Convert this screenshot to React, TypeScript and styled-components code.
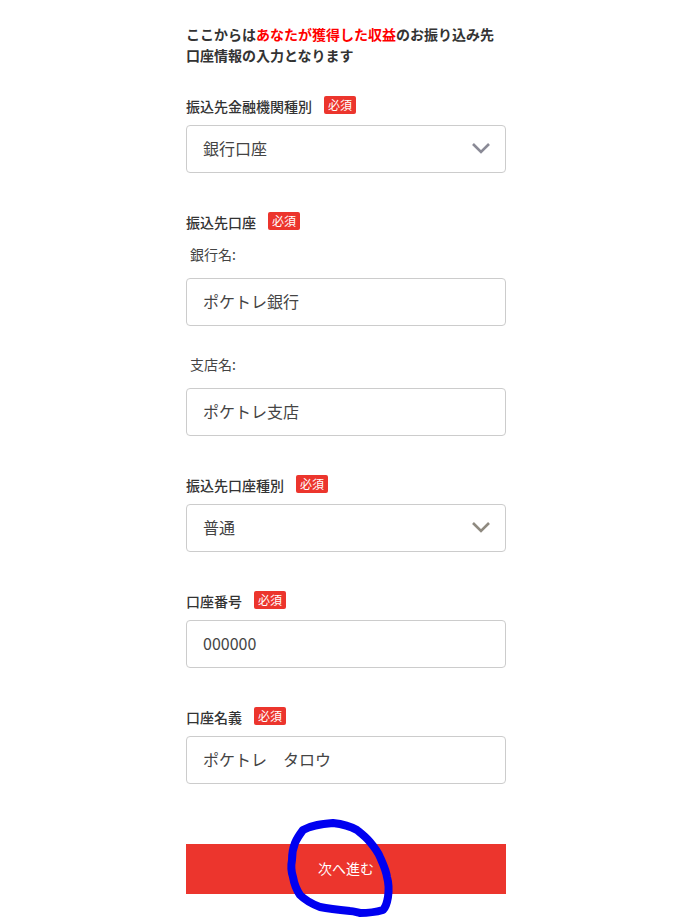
import React from "react";
import styled, { createGlobalStyle } from "styled-components";

const Global = createGlobalStyle`
  html, body { margin: 0; padding: 0; background: #fff; }
  body { font-family: "Noto Sans CJK JP", "Noto Sans", sans-serif; color: #333; }
`;

const Page = styled.div`
  position: relative;
  width: 692px;
  height: 918px;
  overflow: hidden;
  background: #fff;
`;

const Form = styled.form`
  width: 320px;
  margin: 0 auto 0 186px;
  padding-top: 24px;
  display: flex;
  flex-direction: column;
`;

const Intro = styled.p`
  margin: 0 0 30px;
  font-size: 14px;
  line-height: 21px;
  font-weight: 700;
  color: #333;
`;

const Accent = styled.span`
  color: #ff0000;
`;

const Field = styled.div<{ $gap?: number }>`
  display: flex;
  flex-direction: column;
  margin-bottom: ${(p) => p.$gap ?? 39}px;
`;

const LabelRow = styled.div<{ $gap?: number }>`
  display: flex;
  align-items: flex-start;
  gap: 12px;
  height: 18px;
  margin-bottom: ${(p) => p.$gap ?? 11}px;
`;

const Label = styled.label`
  font-size: 14px;
  line-height: 20px;
  margin-top: 0;
  font-weight: 500;
  color: #333;
`;

const Badge = styled.span`
  display: flex;
  align-items: center;
  justify-content: center;
  width: 32px;
  height: 18px;
  border-radius: 2px;
  background: #ec352d;
  color: #fff;
  font-size: 12px;
  line-height: 18px;
`;

const SubLabel = styled.div`
  font-size: 14px;
  line-height: 20px;
  height: 20px;
  padding-left: 4px;
  margin-top: -1px;
  margin-bottom: 14px;
  color: #444;
`;

const Box = styled.div`
  box-sizing: border-box;
  display: flex;
  align-items: center;
  justify-content: space-between;
  height: 48px;
  padding: 0 14px 2px 16px;
  border: 1px solid #ccc;
  border-radius: 4px;
  background: #fff;
  font-size: 16px;
  color: #444;
`;

const Chevron = styled.svg`
  display: block;
  width: 20px;
  height: 12px;
`;

const Submit = styled.button`
  display: block;
  width: 320px;
  height: 50px;
  margin-top: 21px;
  padding: 0 0 2px;
  border: 0;
  background: #ec352d;
  color: #fff;
  font-family: inherit;
  font-size: 14px;
`;

const Scribble = styled.svg`
  position: absolute;
  left: 0;
  top: 0;
  width: 692px;
  height: 918px;
  pointer-events: none;
`;

const Arrow = ({ color }: { color: string }) => (
  <Chevron viewBox="0 0 20 12" aria-hidden="true">
    <path d="M2 2 L10 10 L18 2" fill="none" stroke={color} strokeWidth="2.6" />
  </Chevron>
);

export default function App() {
  return (
    <Page>
      <Global />
      <Form>
        <Intro>
          ここからは<Accent>あなたが獲得した収益</Accent>のお振り込み先口座情報の入力となります
        </Intro>

        <Field>
          <LabelRow>
            <Label>振込先金融機関種別</Label>
            <Badge>必須</Badge>
          </LabelRow>
          <Box>
            銀行口座
            <Arrow color="#8a8a96" />
          </Box>
        </Field>

        <Field $gap={29}>
          <LabelRow $gap={15}>
            <Label>振込先口座</Label>
            <Badge>必須</Badge>
          </LabelRow>
          <SubLabel>銀行名:</SubLabel>
          <Box>ポケトレ銀行</Box>
        </Field>

        <Field>
          <SubLabel>支店名:</SubLabel>
          <Box>ポケトレ支店</Box>
        </Field>

        <Field>
          <LabelRow>
            <Label>振込先口座種別</Label>
            <Badge>必須</Badge>
          </LabelRow>
          <Box>
            普通
            <Arrow color="#8f8a80" />
          </Box>
        </Field>

        <Field>
          <LabelRow>
            <Label>口座番号</Label>
            <Badge>必須</Badge>
          </LabelRow>
          <Box>000000</Box>
        </Field>

        <Field>
          <LabelRow>
            <Label>口座名義</Label>
            <Badge>必須</Badge>
          </LabelRow>
          <Box>ポケトレ　タロウ</Box>
        </Field>

        <Submit type="button">次へ進む</Submit>
      </Form>

      <Scribble viewBox="0 0 692 918" aria-hidden="true">
        <path
          d="M303 830 C312 825 322 824 333 823 C342 824 350 826 357 830 C362 834 366 837 370 842 C375 848 378 852 380 857 C383 864 386 870 387 877 C389 884 389 890 388 897 C387 903 386 907 383 910 C376 912 368 913 360 913 C356 912 353 911 350 911 C340 910 330 909 320 907 C312 904 305 900 300 895 C296 889 294 883 293 877 C291 871 291 865 292 860 C292 854 293 848 295 843 C297 838 300 834 303 830 Z"
          fill="none"
          stroke="#0000f0"
          strokeWidth="8"
          strokeLinejoin="round"
        />
      </Scribble>
    </Page>
  );
}
